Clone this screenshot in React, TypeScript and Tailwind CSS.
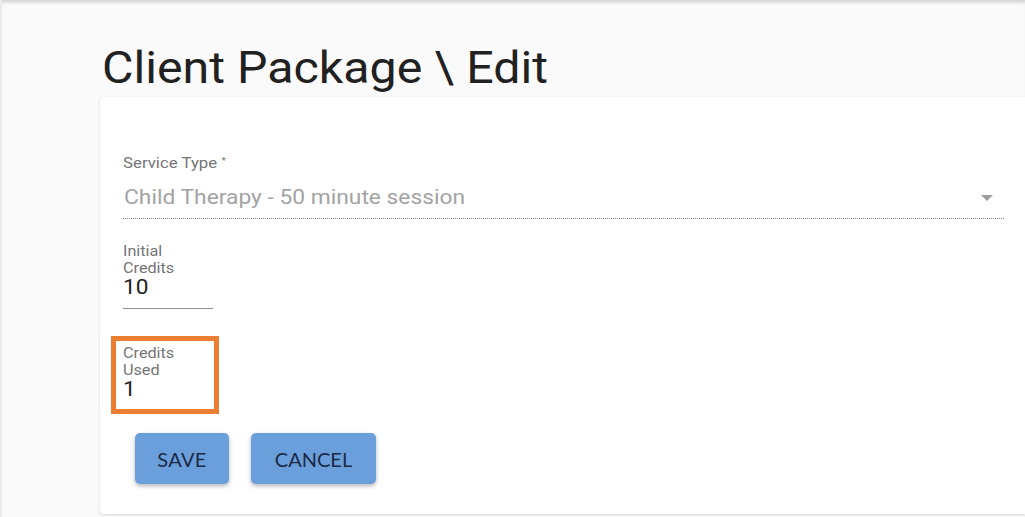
import React from "react";

const Stretch = ({ children, s }: { children: React.ReactNode; s: string }) => (
  <span className={`inline-block origin-left ${s}`}>{children}</span>
);

export default function App() {
  return (
    <div
      className="w-[1025px] h-[517px] overflow-hidden bg-[#fafafa] flex flex-col border-l-2 border-[#ececec] shadow-[inset_0_5px_4px_-3px_rgba(0,0,0,0.18)]"
      style={{ fontFamily: "Roboto, 'Liberation Sans', sans-serif" }}
    >
      <h1 className="mt-[46px] ml-[100px] text-[44px] leading-none text-[#212121] font-normal">
        <Stretch s="scale-x-[1.098]">Client Package \ Edit</Stretch>
      </h1>
      <div className="mt-[7px] ml-[98px] h-[417px] bg-white rounded-l-[4px] shadow-[0_1px_3px_rgba(0,0,0,0.14)] pl-[23px] pr-[21px] pt-[58px] flex flex-col">
        {/* Service type select */}
        <div className="flex flex-col">
          <div className="text-[15px] leading-[17px] text-[#757575]">
            <Stretch s="scale-x-[1.12]">
              Service Type <sup className="text-[9px] -top-[4px]">*</sup>
            </Stretch>
          </div>
          <div className="mt-[13px] flex items-center justify-between pb-[9px] border-b border-dotted border-[#8a8a8a]">
            <span className="text-[21px] leading-[24px] text-[#a3a3a3] pl-[1px]">
              <Stretch s="scale-x-[1.085]">Child Therapy - 50 minute session</Stretch>
            </span>
            <svg width="12" height="6" viewBox="0 0 12 6" className="mr-[11px] mt-[2px]">
              <path d="M0 0 L12 0 L6 6 Z" fill="#9e9e9e" />
            </svg>
          </div>
        </div>

        {/* Initial credits */}
        <div className="mt-[24px] w-[90px] flex flex-col">
          <div className="text-[15px] leading-[17px] text-[#757575]">
            <Stretch s="scale-x-[1.08]">Initial</Stretch>
            <br />
            <Stretch s="scale-x-[1.08]">Credits</Stretch>
          </div>
          <div className="text-[21px] leading-[20px] text-[#222]">
            <Stretch s="scale-x-[1.08]">10</Stretch>
          </div>
          <div className="mt-[11px] h-px bg-[#8f8f8f]" />
        </div>

        {/* Credits used with annotation box */}
        <div className="mt-[27px] -ml-[12px] w-[108px] h-[78px] border-[5px] border-[#ed7d31] pl-[7px] pt-[4px] flex flex-col">
          <div className="text-[15px] leading-[17px] text-[#757575]">
            <Stretch s="scale-x-[1.08]">Credits</Stretch>
            <br />
            <Stretch s="scale-x-[1.08]">Used</Stretch>
          </div>
          <div className="text-[21px] leading-[20px] text-[#222]">
            <Stretch s="scale-x-[1.08]">1</Stretch>
          </div>
        </div>

        {/* Buttons */}
        <div
          className="mt-[19px] ml-[12px] flex gap-[22px]"
          style={{ fontFamily: "Lato, 'Liberation Sans', sans-serif" }}
        >
          <button className="w-[94px] h-[51px] rounded-[5px] bg-[#6a9fdc] text-[#1b2a44] text-[20px] tracking-[0.3px] shadow-[0_2px_4px_rgba(0,0,0,0.3)]">
            SAVE
          </button>
          <button className="w-[125px] h-[51px] rounded-[5px] bg-[#6a9fdc] text-[#1b2a44] text-[20px] shadow-[0_2px_4px_rgba(0,0,0,0.3)]">
            CANCEL
          </button>
        </div>
      </div>
    </div>
  );
}
